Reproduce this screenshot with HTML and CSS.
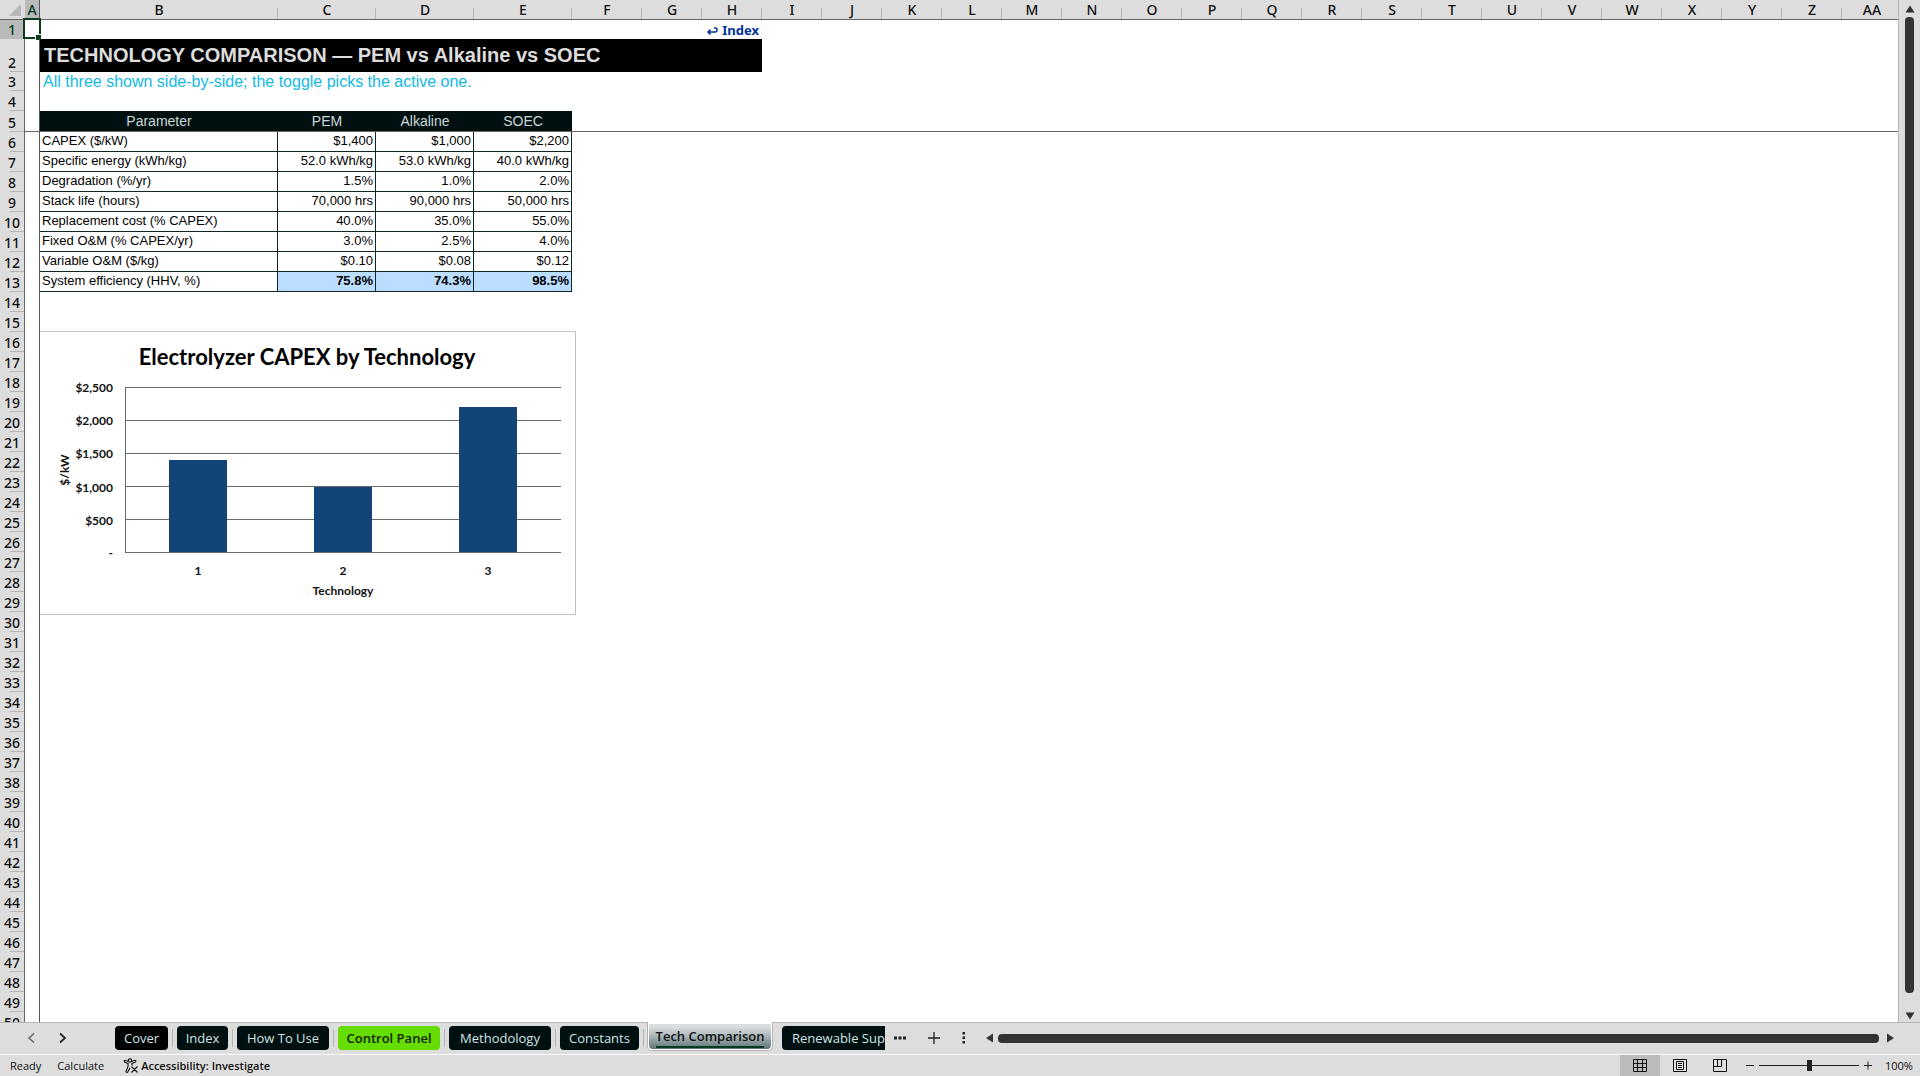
FILE: index.html
```html
<!DOCTYPE html>
<html lang="en">
<head>
<meta charset="utf-8">
<title>Tech Comparison</title>
<link rel="stylesheet" href="styles.css">
</head>
<body>
<div class="app">
  <div class="workspace">
    <main class="pane">
      <table class="sheet">
        <colgroup id="cols">
          <col class="w-num"><col class="w-a"><col class="w-b"><col class="w-data"><col class="w-data"><col class="w-data"><col class="w-f">
        </colgroup>
        <thead>
          <tr id="letters"><th class="corner"><svg width="12" height="12" viewBox="0 0 12 12"><path d="M12 0V12H0Z" fill="#b7b7b7"/></svg></th></tr>
        </thead>
        <tbody id="rows">
          <tr class="short"><th class="sel">1</th><td class="cell-a"><span class="cursor"></span></td><td colspan="7" class="back"><a href="#index"><svg width="12" height="8" viewBox="0 0 12 8"><path d="M8 1H9.500Q11 1 11 3T9.500 5H2M4.500 2.500L2 5L4.500 7.500" fill="none" stroke="#003399" stroke-width="1.500"/></svg>Index</a></td></tr>
          <tr class="tall"><th>2</th><td class="cell-a"></td><td colspan="7" class="title">TECHNOLOGY COMPARISON — PEM vs Alkaline vs SOEC</td></tr>
          <tr class="short"><th>3</th><td class="cell-a"></td><td colspan="7" class="note">All three shown side-by-side; the toggle picks the active one.</td></tr>
          <tr><th>4</th><td class="cell-a"></td></tr>
          <tr class="head"><th>5</th><td class="cell-a"></td><td class="hd">Parameter</td><td class="hd">PEM</td><td class="hd">Alkaline</td><td class="hd">SOEC</td><td class="rest" colspan="22"></td></tr>
          <tr><th>6</th><td class="cell-a"></td><td class="lbl">CAPEX ($/kW)</td><td class="num">$1,400</td><td class="num">$1,000</td><td class="num">$2,200</td></tr>
          <tr><th>7</th><td class="cell-a"></td><td class="lbl">Specific energy (kWh/kg)</td><td class="num">52.0 kWh/kg</td><td class="num">53.0 kWh/kg</td><td class="num">40.0 kWh/kg</td></tr>
          <tr><th>8</th><td class="cell-a"></td><td class="lbl">Degradation (%/yr)</td><td class="num">1.5%</td><td class="num">1.0%</td><td class="num">2.0%</td></tr>
          <tr><th>9</th><td class="cell-a"></td><td class="lbl">Stack life (hours)</td><td class="num">70,000 hrs</td><td class="num">90,000 hrs</td><td class="num">50,000 hrs</td></tr>
          <tr><th>10</th><td class="cell-a"></td><td class="lbl">Replacement cost (% CAPEX)</td><td class="num">40.0%</td><td class="num">35.0%</td><td class="num">55.0%</td></tr>
          <tr><th>11</th><td class="cell-a"></td><td class="lbl">Fixed O&amp;M (% CAPEX/yr)</td><td class="num">3.0%</td><td class="num">2.5%</td><td class="num">4.0%</td></tr>
          <tr><th>12</th><td class="cell-a"></td><td class="lbl">Variable O&amp;M ($/kg)</td><td class="num">$0.10</td><td class="num">$0.08</td><td class="num">$0.12</td></tr>
          <tr><th>13</th><td class="cell-a"></td><td class="lbl">System efficiency (HHV, %)</td><td class="num total">75.8%</td><td class="num total">74.3%</td><td class="num total">98.5%</td></tr>
        </tbody>
      </table>
      <figure class="chart">
        <svg width="535" height="282" viewBox="0 1 535 282" role="img" aria-label="Electrolyzer CAPEX by Technology">
          <g stroke="#6a6a6a" stroke-width="1" shape-rendering="crispEdges">
            <path d="M85 56.500H521M85 89.500H521M85 122.500H521M85 155.500H521M85 188.500H521M85 221.500H521M85.500 56V222"/>
          </g>
          <g fill="#124477"><path d="M129 129h58v92h-58zM274 156h58v65h-58zM419 76h58v145h-58z"/></g>
          <g class="axis" text-anchor="end">
            <text x="73" y="61">$2,500</text><text x="73" y="94">$2,000</text><text x="73" y="127">$1,500</text><text x="73" y="161">$1,000</text><text x="73" y="194">$500</text><text x="73" y="226">-</text>
          </g>
          <g class="axis" text-anchor="middle">
            <text x="158" y="244">1</text><text x="303" y="244">2</text><text x="448" y="244">3</text><text x="303" y="264">Technology</text>
            <text x="29" y="139" transform="rotate(-90 29 139)">$/kW</text>
            <text class="chart-title" x="267" y="34">Electrolyzer CAPEX by Technology</text>
          </g>
        </svg>
      </figure>
    </main>
    <div class="vscroll">
      <svg width="10" height="8" viewBox="0 0 10 8"><path d="M5 0.500L9.500 7.500H0.500Z" fill="#333"/></svg>
      <div class="thumb"></div>
      <svg width="10" height="8" viewBox="0 0 10 8"><path d="M5 7.500L9.500 0.500H0.500Z" fill="#333"/></svg>
    </div>
  </div>
  <nav class="tabs">
    <div class="arrows">
      <button aria-label="Previous sheet"><svg width="8" height="12" viewBox="0 0 8 12"><path d="M7 1.500L2 6L7 10.500" fill="none" stroke="#666" stroke-width="1.500"/></svg></button>
      <button aria-label="Next sheet"><svg width="8" height="12" viewBox="0 0 8 12"><path d="M1 1.500L6 6L1 10.500" fill="none" stroke="#222" stroke-width="1.700"/></svg></button>
    </div>
    <button class="tab t-cover">Cover</button>
    <button class="tab t-index">Index</button>
    <button class="tab t-how">How To Use</button>
    <button class="tab t-control">Control Panel</button>
    <button class="tab t-method">Methodology</button>
    <button class="tab t-const">Constants</button>
    <div class="active-wrap"><button class="active"><span>Tech Comparison</span></button></div>
    <button class="tab t-renew">Renewable Sup</button>
    <div class="tools">
      <button aria-label="More sheets"><svg width="12" height="4" viewBox="0 0 12 4"><path d="M0 .5h3v3H0zM4.500 .5h3v3h-3zM9 .5h3v3H9z" fill="#222"/></svg></button>
      <button aria-label="New sheet"><svg width="12" height="12" viewBox="0 0 12 12"><path d="M6 0V12M0 6H12" stroke="#222" stroke-width="1.300"/></svg></button>
      <button aria-label="Resize tabs"><svg width="4" height="12" viewBox="0 0 4 12"><path d="M.5 0h2.500v2.500h-2.500zM.5 4.500h2.500v2.500h-2.500zM.5 9h2.500v2.500h-2.500z" fill="#222"/></svg></button>
    </div>
    <div class="hscroll">
      <svg width="8" height="10" viewBox="0 0 8 10"><path d="M0 5L7 .5V9.500Z" fill="#333"/></svg>
      <div class="thumb"></div>
      <svg width="8" height="10" viewBox="0 0 8 10"><path d="M8 5L1 .5V9.500Z" fill="#333"/></svg>
    </div>
  </nav>
  <footer class="status">
    <span class="ready">Ready</span><span class="calc">Calculate</span>
    <svg class="acc-icon" width="16" height="16" viewBox="0 0 16 16" fill="none" stroke="#1c1c1c" stroke-width="1.200"><circle cx="7" cy="2.500" r="1.700"/><path d="M5.500 3.500L2 2.300Q.5 2.800 1.500 4L5 5.500V8.500L3 13.500Q3.500 15 4.700 14.200L7 10M8.500 3.500L12 2.300Q13.500 2.800 12.500 4L9 5.500V7.500M8.500 8.500L14.500 14.500M14.500 8.500L8.500 14.500"/></svg>
    <span class="acc">Accessibility: Investigate</span>
    <div class="views">
      <button class="on" aria-label="Normal view"><svg width="14" height="14" viewBox="0 0 14 14" fill="none" stroke="#111"><path d="M.5.5h13v12h-13zM.5 4.500h13M.5 8.500h13M4.500 .5v12M9.500 .5v12"/></svg></button>
      <button aria-label="Page layout"><svg width="14" height="14" viewBox="0 0 14 14" fill="none" stroke="#111"><path d="M.5.5h13v12h-13zM3.500 2.500h7v8h-7zM5 4.500h4M5 6.500h4M5 8.500h4"/></svg></button>
      <button aria-label="Page break preview"><svg width="14" height="14" viewBox="0 0 14 14" fill="none" stroke="#111"><path d="M.5.5h13v12h-13zM4.500 .5v7M8.500 .5v7M.5 7.500h8"/></svg></button>
    </div>
    <div class="zoom">
      <button aria-label="Zoom out"><svg width="8" height="10" viewBox="0 0 8 10"><path d="M0 4.500h8" stroke="#222"/></svg></button>
      <input type="range" min="0" max="100" value="50" aria-label="Zoom">
      <button aria-label="Zoom in"><svg width="8" height="10" viewBox="0 0 8 10"><path d="M0 4.500h8M4 .5v8" stroke="#222"/></svg></button>
    </div>
    <span class="pct">100%</span>
  </footer>
</div>
<script src="sheet.js"></script>
</body>
</html>
```
FILE: styles.css
```css
* { box-sizing: border-box; }
body { margin: 0; color: #111; font-family: "Noto Sans", "Open Sans", sans-serif; font-size: 12px; }
button { border: 0; padding: 0; margin: 0; background: none; font: inherit; color: inherit; display: flex; align-items: center; justify-content: center; white-space: nowrap; }
svg { display: block; flex: none; }
.app { height: 100vh; display: flex; flex-direction: column; background: #ddd; overflow: hidden; }
.workspace { flex: 1; min-height: 0; display: flex; }
.pane { flex: 1; min-width: 0; position: relative; overflow: hidden; background: #fff; border-right: 1px solid #b5b5b5; }

.sheet { table-layout: fixed; width: 1902px; border-collapse: separate; border-spacing: 0; }
.w-num { width: 25px; }
.w-a { width: 15px; }
.w-b { width: 238px; }
.w-data { width: 98px; }
.w-f { width: 70px; }
.w-std { width: 60px; }
.sheet tr { height: 20px; }
.sheet tr.short { height: 19px; }
.sheet tr.tall { height: 33px; }
.sheet tr.head { height: 21px; }
.sheet th, .sheet td { padding: 0; height: inherit; line-height: 18px; white-space: nowrap; overflow: hidden; }
.sheet thead th { background: #ddd linear-gradient(#b5b5b5, #b5b5b5) right bottom / 1px 11px no-repeat; border-bottom: 1px solid #666; font-size: 14px; font-weight: 500; vertical-align: bottom; }
.sheet thead th.sel { background: #b9b9b9; border-right: 1px solid #555; color: #003a1c; }
.sheet thead th.corner { background: #ddd; vertical-align: middle; }
.corner svg { margin-left: 9px; }
.sheet tbody th { background: #ddd linear-gradient(#b5b5b5, #b5b5b5) right bottom / 14px 1px no-repeat; border-right: 1px solid #666; font-size: 14px; font-weight: 500; vertical-align: bottom; }
.sheet tbody th.sel { background: #b9b9b9; color: #003a1c; }
.sheet .cell-a { border-right: 1px solid #555; overflow: visible; position: relative; }
.sheet .head .cell-a { border-bottom: 1px solid #666; }
.cursor { position: absolute; inset: -2px -2px 0 -2px; border: 2px solid #0d3b1e; }
.cursor::after { content: ""; position: absolute; right: -2px; bottom: -3px; width: 5px; height: 5px; background: #0d3b1e; border: solid #fff; border-width: 1px 0 0 1px; }
.sheet .back { text-align: right; padding-right: 3px; font-size: 13px; font-weight: 700; }
.back a { color: #039; text-decoration: none; }
.back svg { display: inline-block; margin-right: 4px; }
.sheet .title { background: #000; color: #ddd; font: 700 20px "Liberation Sans", Arial, sans-serif; padding-left: 4px; }
.sheet .note { color: #12b9e4; font: 16px/19px "Liberation Sans", Arial, sans-serif; padding-left: 3px; }
.sheet .hd { background: #001010; color: #ccd8d8; font: 14px/18px "Liberation Sans", Arial, sans-serif; text-align: center; }
.sheet .head td { border-bottom: 1px solid #666; }
.sheet .lbl, .sheet .num { border-right: 1px solid #0f2626; border-bottom: 1px solid #0f2626; font: 13px/18px "Liberation Sans", Arial, sans-serif; vertical-align: top; color: #000; }
.sheet .lbl { padding-left: 2px; }
.sheet .num { text-align: right; padding-right: 2px; }
.sheet .total { background: #bbddff; font-weight: 700; }

.chart { position: absolute; left: 40px; top: 331px; margin: 0; background: #fff; border: solid #c2c2c2; border-width: 1px 1px 1px 0; }
.axis { font: 700 12px Lato, sans-serif; fill: #111; }
.chart-title { font-size: 22px; fill: #000; }

.vscroll { width: 21px; display: flex; flex-direction: column; align-items: center; padding: 5px 0 2px; gap: 4px; }
.vscroll .thumb { flex: 1; width: 9px; border-radius: 4px; background: #333; margin-bottom: 15px; }

.tabs { height: 32px; display: flex; align-items: flex-start; padding: 3px 26px 0 0; border-top: 1px solid #b5b5b5; }
.arrows { width: 115px; height: 24px; display: flex; gap: 24px; padding-left: 27px; }
.tab { position: relative; height: 24px; margin-right: 9px; padding-bottom: 1px; border-radius: 4px; background: #001010; color: #d0e4e6; font: 13px "Open Sans", "Noto Sans", sans-serif; overflow: visible; flex: none; }
.tab::after { content: ""; position: absolute; right: -5px; top: 3px; width: 1px; height: 18px; background: #b5b5b5; }
.t-cover { width: 53px; background: #000; }
.t-index { width: 51px; }
.t-how { width: 92px; }
.t-control { width: 102px; background: #6d0; color: #122200; font-weight: 600; }
.t-method { width: 102px; }
.t-const { width: 79px; }
.t-renew { width: 103px; margin-right: 0; padding-left: 10px; border-radius: 4px 0 0 4px; justify-content: flex-start; overflow: hidden; }
.t-renew::after { content: none; }
.active-wrap { margin: -4px 9px 0 -1px; padding: 2px 1px 1px; border: 1px solid #b5b5b5; border-top: 0; border-radius: 0 0 5px 5px; background: #fff; width: 126px; }
.active { width: 100%; height: 25px; border-radius: 0 0 4px 4px; background: linear-gradient(#ddd 10%, #b5c0c4 40%, #5f7474); color: #111; font: 600 13px/20px "Open Sans", "Noto Sans", sans-serif; }
.active span { border-bottom: 2px solid #063a20; }
.tools { display: flex; height: 24px; width: 101px; padding-left: 9px; gap: 22px; }
.hscroll { flex: 1; height: 24px; display: flex; align-items: center; gap: 4px; }
.hscroll .thumb { flex: 1; height: 9px; border-radius: 4px; background: #333; }
.hscroll .thumb + svg { margin-left: 3px; }

.status { height: 22px; border-top: 1px solid #fff; display: flex; align-items: center; padding: 0 8px 0 10px; font: 11px "Open Sans", "Noto Sans", sans-serif; }
.calc { margin-left: 16px; }
.acc-icon { margin: 0 2px 0 19px; }
.acc { font-weight: 600; }
.views { margin-left: auto; display: flex; align-self: stretch; }
.views button { width: 40px; }
.views .on { background: #bbb; }
.zoom { display: flex; align-items: center; gap: 5px; margin: 0 13px 0 6px; }
.zoom input { appearance: none; width: 100px; height: 12px; margin: 0; background: linear-gradient(#222, #222) center / 100% 1px no-repeat; }
.zoom input::-webkit-slider-thumb { appearance: none; width: 5px; height: 11px; background: #222; }
.pct { width: 27px; }
```
FILE: sheet.js
```js
const names = [..."ABCDEFGHIJKLMNOPQRSTUVWXYZ", "AA"];
const cols = document.getElementById("cols");
const letters = document.getElementById("letters");
names.forEach((name, i) => {
  if (i > 5) {
    const col = document.createElement("col");
    col.className = "w-std";
    cols.append(col);
  }
  const th = document.createElement("th");
  th.textContent = name;
  if (i === 0) th.className = "sel";
  letters.append(th);
});
const rows = document.getElementById("rows");
for (let n = 14; n <= 50; n++) {
  const tr = rows.insertRow();
  const th = document.createElement("th");
  th.textContent = n;
  tr.append(th);
  tr.insertCell().className = "cell-a";
}
```
